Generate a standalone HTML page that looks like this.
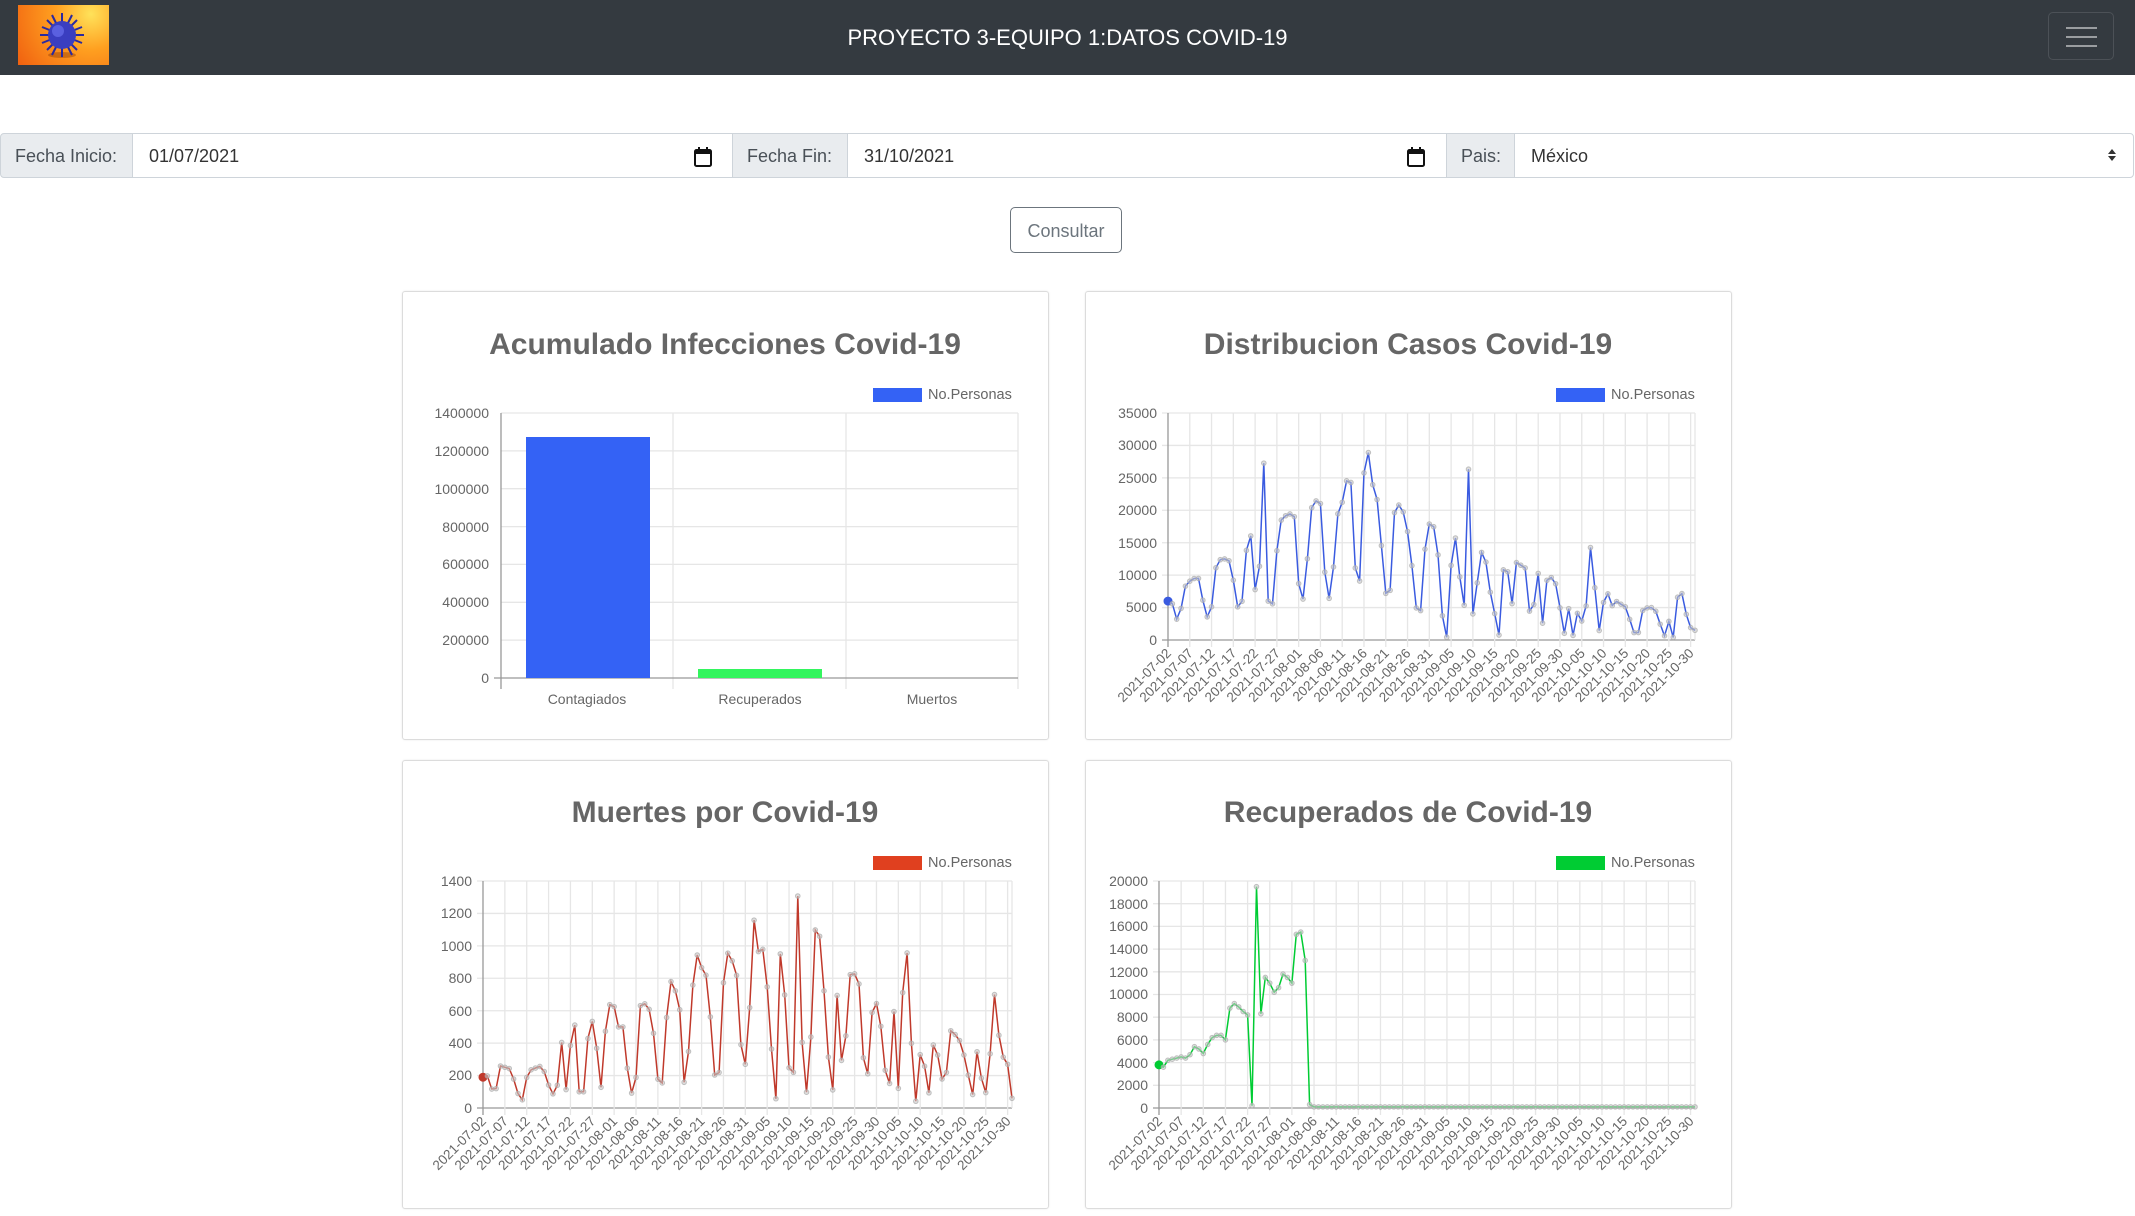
<!DOCTYPE html>
<html><head><meta charset="utf-8">
<style>
*{box-sizing:border-box;margin:0;padding:0}
body{width:2135px;height:1216px;background:#fff;font-family:"Liberation Sans",sans-serif;position:relative;overflow:hidden}
.nav{position:absolute;left:0;top:0;width:2135px;height:75px;background:#343a40}
.logo{position:absolute;left:18px;top:5px;width:91px;height:60px;background:radial-gradient(circle at 80% 15%,#ffe25a 0%,#ffa020 40%,#f06010 100%)}
.title{position:absolute;left:0;width:2135px;top:25px;text-align:center;color:#fff;font-size:22px}
.burger{position:absolute;left:2048px;top:12px;width:66px;height:48px;border:1px solid rgba(255,255,255,.12);border-radius:5px}
.burger i{position:absolute;left:17px;width:31px;height:2px;background:#9a9da0}
.ig{position:absolute;top:133px;height:45px;border:1px solid #ced4da;font-size:18px;color:#495057;line-height:44px}
.lab{background:#e9ecef;padding-left:14px}
.inp{background:#fff;padding-left:16px;color:#333}
.btn{position:absolute;left:1010px;top:207px;width:112px;height:46px;border:1px solid #6c757d;border-radius:5px;font-size:18px;color:#6c757d;text-align:center;line-height:46px}
.card{position:absolute;width:647px;height:449px;border:1px solid #dcdcdc;border-radius:3px;box-shadow:0 0 2px rgba(0,0,0,.08)}
svg.main{position:absolute;left:0;top:0}
</style></head><body>
<div class="nav">
 <div class="logo"><svg width="91" height="60" viewBox="0 0 91 60">
  <ellipse cx="44" cy="50" rx="14" ry="3" fill="rgba(120,40,0,.35)"/>
  <g stroke="#2a2aa0" stroke-width="2">
   <line x1="44" y1="8" x2="44" y2="52"/><line x1="22" y1="30" x2="66" y2="30"/>
   <line x1="29" y1="15" x2="59" y2="45"/><line x1="59" y1="15" x2="29" y2="45"/>
   <line x1="34" y1="10" x2="54" y2="50"/><line x1="54" y1="10" x2="34" y2="50"/>
   <line x1="24" y1="22" x2="64" y2="38"/><line x1="24" y1="38" x2="64" y2="22"/>
  </g>
  <circle cx="44" cy="30" r="14" fill="#3a3ec0"/><circle cx="40" cy="26" r="6" fill="#5a60e0"/>
 </svg></div>
 <div class="title">PROYECTO 3-EQUIPO 1:DATOS COVID-19</div>
 <div class="burger"><i style="top:14px"></i><i style="top:23px"></i><i style="top:32px"></i></div>
</div>

<div class="ig lab" style="left:0;width:133px;border-radius:4px 0 0 4px">Fecha Inicio:</div>
<div class="ig inp" style="left:132px;width:601px">01/07/2021
 <svg style="position:absolute;left:560px;top:12px" width="20" height="22" viewBox="0 0 20 22"><rect x="2" y="4" width="16" height="16" rx="1.5" fill="none" stroke="#111" stroke-width="2"/><rect x="2" y="4" width="16" height="4" fill="#111"/><rect x="5" y="1" width="2" height="5" fill="#111"/><rect x="13" y="1" width="2" height="5" fill="#111"/></svg></div>
<div class="ig lab" style="left:732px;width:116px">Fecha Fin:</div>
<div class="ig inp" style="left:847px;width:600px">31/10/2021
 <svg style="position:absolute;left:558px;top:12px" width="20" height="22" viewBox="0 0 20 22"><rect x="2" y="4" width="16" height="16" rx="1.5" fill="none" stroke="#111" stroke-width="2"/><rect x="2" y="4" width="16" height="4" fill="#111"/><rect x="5" y="1" width="2" height="5" fill="#111"/><rect x="13" y="1" width="2" height="5" fill="#111"/></svg></div>
<div class="ig lab" style="left:1446px;width:69px">Pais:</div>
<div class="ig inp" style="left:1514px;width:620px;border-radius:0 4px 4px 0">México
 <svg style="position:absolute;left:592px;top:13px" width="10" height="16" viewBox="0 0 10 16"><path d="M1 7 L5 2 L9 7Z M1 9 L5 14 L9 9Z" fill="#333"/></svg></div>
<div class="btn">Consultar</div>

<div class="card" style="left:402px;top:291px"></div>
<div class="card" style="left:1085px;top:291px"></div>
<div class="card" style="left:402px;top:760px"></div>
<div class="card" style="left:1085px;top:760px"></div>

<svg class="main" width="2135" height="1216" viewBox="0 0 2135 1216" font-family="Liberation Sans, sans-serif">
<g font-size="30" font-weight="bold" fill="#666" text-anchor="middle">
 <text x="725" y="354">Acumulado Infecciones Covid-19</text>
 <text x="1408" y="354">Distribucion Casos Covid-19</text>
 <text x="725" y="822">Muertes por Covid-19</text>
 <text x="1408" y="822">Recuperados de Covid-19</text>
</g>
<g font-size="14.5" fill="#666">
 <rect x="873" y="388" width="49" height="14" fill="#3462f5"/><text x="928" y="399">No.Personas</text>
 <rect x="1556" y="388" width="49" height="14" fill="#3462f5"/><text x="1611" y="399">No.Personas</text>
 <rect x="873" y="856" width="49" height="14" fill="#e0401f"/><text x="928" y="867">No.Personas</text>
 <rect x="1556" y="856" width="49" height="14" fill="#00cc33"/><text x="1611" y="867">No.Personas</text>
</g>
<g id="grids"></g>
<g stroke="#e6e6e6" stroke-width="1.3">
 <line x1="501" y1="413" x2="1018" y2="413"/><line x1="501" y1="450.9" x2="1018" y2="450.9"/><line x1="501" y1="488.7" x2="1018" y2="488.7"/><line x1="501" y1="526.6" x2="1018" y2="526.6"/><line x1="501" y1="564.4" x2="1018" y2="564.4"/><line x1="501" y1="602.3" x2="1018" y2="602.3"/><line x1="501" y1="640.1" x2="1018" y2="640.1"/>
 <line x1="673" y1="413" x2="673" y2="689"/><line x1="846" y1="413" x2="846" y2="689"/><line x1="1018" y1="413" x2="1018" y2="689"/>
</g>
<g stroke="#999" stroke-width="1.3"><line x1="501" y1="413" x2="501" y2="689"/><line x1="494" y1="678" x2="1018" y2="678"/></g>
<rect x="526" y="437" width="124" height="241" fill="#3462f5"/>
<rect x="698" y="669" width="124" height="9" fill="#33f55e"/>
<g font-size="14" fill="#666" text-anchor="end">
 <text x="489" y="418">1400000</text><text x="489" y="456">1200000</text><text x="489" y="494">1000000</text><text x="489" y="532">800000</text><text x="489" y="569">600000</text><text x="489" y="607">400000</text><text x="489" y="645">200000</text><text x="489" y="683">0</text>
</g>
<g font-size="14" fill="#666" text-anchor="middle"><text x="587" y="704">Contagiados</text><text x="760" y="704">Recuperados</text><text x="932" y="704">Muertos</text></g>

<g font-size="14" fill="#666" text-anchor="end">
 <text x="1157" y="418">35000</text><text x="1157" y="450">30000</text><text x="1157" y="483">25000</text><text x="1157" y="515">20000</text><text x="1157" y="548">15000</text><text x="1157" y="580">10000</text><text x="1157" y="612">5000</text><text x="1157" y="645">0</text>
 <text x="472" y="886">1400</text><text x="472" y="918">1200</text><text x="472" y="951">1000</text><text x="472" y="983">800</text><text x="472" y="1016">600</text><text x="472" y="1048">400</text><text x="472" y="1080">200</text><text x="472" y="1113">0</text>
 <text x="1148" y="886">20000</text><text x="1148" y="909">18000</text><text x="1148" y="931">16000</text><text x="1148" y="954">14000</text><text x="1148" y="977">12000</text><text x="1148" y="999">10000</text><text x="1148" y="1022">8000</text><text x="1148" y="1045">6000</text><text x="1148" y="1068">4000</text><text x="1148" y="1090">2000</text><text x="1148" y="1113">0</text>
</g>
<g id="lines"></g>
<g font-size="13.5" fill="#666" text-anchor="end">
<g transform="translate(1172,654)">
<text transform="translate(0,0) rotate(-45)">2021-07-02</text><text transform="translate(21.8,0) rotate(-45)">2021-07-07</text><text transform="translate(43.6,0) rotate(-45)">2021-07-12</text><text transform="translate(65.3,0) rotate(-45)">2021-07-17</text><text transform="translate(87.1,0) rotate(-45)">2021-07-22</text><text transform="translate(108.9,0) rotate(-45)">2021-07-27</text><text transform="translate(130.7,0) rotate(-45)">2021-08-01</text><text transform="translate(152.4,0) rotate(-45)">2021-08-06</text><text transform="translate(174.2,0) rotate(-45)">2021-08-11</text><text transform="translate(196,0) rotate(-45)">2021-08-16</text><text transform="translate(217.8,0) rotate(-45)">2021-08-21</text><text transform="translate(239.5,0) rotate(-45)">2021-08-26</text><text transform="translate(261.3,0) rotate(-45)">2021-08-31</text><text transform="translate(283.1,0) rotate(-45)">2021-09-05</text><text transform="translate(304.9,0) rotate(-45)">2021-09-10</text><text transform="translate(326.7,0) rotate(-45)">2021-09-15</text><text transform="translate(348.4,0) rotate(-45)">2021-09-20</text><text transform="translate(370.2,0) rotate(-45)">2021-09-25</text><text transform="translate(392,0) rotate(-45)">2021-09-30</text><text transform="translate(413.8,0) rotate(-45)">2021-10-05</text><text transform="translate(435.5,0) rotate(-45)">2021-10-10</text><text transform="translate(457.3,0) rotate(-45)">2021-10-15</text><text transform="translate(479.1,0) rotate(-45)">2021-10-20</text><text transform="translate(500.9,0) rotate(-45)">2021-10-25</text><text transform="translate(522.6,0) rotate(-45)">2021-10-30</text>
</g>
<g transform="translate(487,1122)">
<text transform="translate(0,0) rotate(-45)">2021-07-02</text><text transform="translate(21.9,0) rotate(-45)">2021-07-07</text><text transform="translate(43.7,0) rotate(-45)">2021-07-12</text><text transform="translate(65.6,0) rotate(-45)">2021-07-17</text><text transform="translate(87.4,0) rotate(-45)">2021-07-22</text><text transform="translate(109.3,0) rotate(-45)">2021-07-27</text><text transform="translate(131.2,0) rotate(-45)">2021-08-01</text><text transform="translate(153,0) rotate(-45)">2021-08-06</text><text transform="translate(174.9,0) rotate(-45)">2021-08-11</text><text transform="translate(196.7,0) rotate(-45)">2021-08-16</text><text transform="translate(218.6,0) rotate(-45)">2021-08-21</text><text transform="translate(240.5,0) rotate(-45)">2021-08-26</text><text transform="translate(262.3,0) rotate(-45)">2021-08-31</text><text transform="translate(284.2,0) rotate(-45)">2021-09-05</text><text transform="translate(306,0) rotate(-45)">2021-09-10</text><text transform="translate(327.9,0) rotate(-45)">2021-09-15</text><text transform="translate(349.8,0) rotate(-45)">2021-09-20</text><text transform="translate(371.6,0) rotate(-45)">2021-09-25</text><text transform="translate(393.5,0) rotate(-45)">2021-09-30</text><text transform="translate(415.3,0) rotate(-45)">2021-10-05</text><text transform="translate(437.2,0) rotate(-45)">2021-10-10</text><text transform="translate(459.1,0) rotate(-45)">2021-10-15</text><text transform="translate(480.9,0) rotate(-45)">2021-10-20</text><text transform="translate(502.8,0) rotate(-45)">2021-10-25</text><text transform="translate(524.6,0) rotate(-45)">2021-10-30</text>
</g>
<g transform="translate(1163,1122)">
<text transform="translate(0,0) rotate(-45)">2021-07-02</text><text transform="translate(22.1,0) rotate(-45)">2021-07-07</text><text transform="translate(44.3,0) rotate(-45)">2021-07-12</text><text transform="translate(66.4,0) rotate(-45)">2021-07-17</text><text transform="translate(88.6,0) rotate(-45)">2021-07-22</text><text transform="translate(110.7,0) rotate(-45)">2021-07-27</text><text transform="translate(132.9,0) rotate(-45)">2021-08-01</text><text transform="translate(155,0) rotate(-45)">2021-08-06</text><text transform="translate(177.2,0) rotate(-45)">2021-08-11</text><text transform="translate(199.3,0) rotate(-45)">2021-08-16</text><text transform="translate(221.5,0) rotate(-45)">2021-08-21</text><text transform="translate(243.6,0) rotate(-45)">2021-08-26</text><text transform="translate(265.8,0) rotate(-45)">2021-08-31</text><text transform="translate(287.9,0) rotate(-45)">2021-09-05</text><text transform="translate(310.1,0) rotate(-45)">2021-09-10</text><text transform="translate(332.2,0) rotate(-45)">2021-09-15</text><text transform="translate(354.4,0) rotate(-45)">2021-09-20</text><text transform="translate(376.5,0) rotate(-45)">2021-09-25</text><text transform="translate(398.7,0) rotate(-45)">2021-09-30</text><text transform="translate(420.8,0) rotate(-45)">2021-10-05</text><text transform="translate(443,0) rotate(-45)">2021-10-10</text><text transform="translate(465.1,0) rotate(-45)">2021-10-15</text><text transform="translate(487.3,0) rotate(-45)">2021-10-20</text><text transform="translate(509.4,0) rotate(-45)">2021-10-25</text><text transform="translate(531.6,0) rotate(-45)">2021-10-30</text>
</g>
</g>
</svg>
<script>
var NS="http://www.w3.org/2000/svg";
function el(p,t,a){var e=document.createElementNS(NS,t);for(var k in a)e.setAttribute(k,a[k]);p.appendChild(e);return e;}
var G=document.getElementById('grids'),L=document.getElementById('lines');
function resample(a,n){var o=[];for(var i=0;i<n;i++){var t=i*(a.length-1)/(n-1),j=Math.floor(t),f=t-j;o.push(j+1<a.length?a[j]*(1-f)+a[j+1]*f:a[j]);}return o;}
function chart(x0,x1,y0,y1,max,n,data,col){
 for(var i=0;i<=n;i++){var y=y0-(y0-y1)*i/n;el(G,'line',{x1:x0-6,x2:x1,y1:y,y2:y,stroke:i==0?'#999':'#e6e6e6','stroke-width':1.3});}
 for(var k=0;k<=24;k++){var x=x0+5*k*(x1-x0)/121;el(G,'line',{x1:x,x2:x,y1:y1,y2:y0+7,stroke:k==0?'#999':'#e6e6e6','stroke-width':1.3});}
 el(G,'line',{x1:x1,x2:x1,y1:y1,y2:y0,stroke:'#e6e6e6','stroke-width':1.3});
 var pts=[];for(var i=0;i<data.length;i++){var x=x0+i*(x1-x0)/(data.length-1),y=y0-(y0-y1)*data[i]/max;pts.push([x,y]);}
 el(L,'polyline',{points:pts.map(function(p){return p[0].toFixed(1)+','+p[1].toFixed(1)}).join(' '),fill:'none',stroke:col,'stroke-width':1.5});
 pts.forEach(function(p,i){el(L,'circle',{cx:p[0],cy:p[1],r:i?2.3:4,fill:i?'rgba(200,200,200,.6)':col,stroke:i?'rgba(170,170,170,.7)':col,'stroke-width':1});});
}
var d=[6,5.5,2,8,9,9.5,9.5,4,3,11,12.5,12.5,12,5,5.5,15,16.5,0,32,6,5.5,18,19,19.5,19,6,6.5,20,21.5,21,7,6,19,21,25,24,0,25,29,23,21,8,5.5,20,21,19,14,5,4.5,17,18.5,16,4,0,16,15.5,0,27,0,13,14,8,4,0,17,3,12,11.5,11,0,13,2,10,9.5,8,0,5,0,6,0,15.5,8,0,9,5,6,5.5,5,2,0,4.5,5,5,4,0,3,0,9.5,5,2,1.5];
chart(1168,1695,640,413,35,7,resample(d,122),'#3a5be0');
var m=[1.9,2,0.5,2.6,2.5,2.4,1,0.5,2.3,2.4,2.6,2.2,1,0.7,4.1,0.2,7,1,1,6.1,4.3,1.2,5.9,6.8,5,5,1,0.8,6.5,6.4,5.8,1.8,1.5,8,7.5,6,0,6.8,9.5,8.5,8,2,2.2,9.8,9.3,8.5,3,2.5,12,9.5,9.9,5,0,11.5,4,0,14,0,2,11,10.5,5,0,7.5,1,8.2,8.3,7.5,0,5.8,6.5,4.4,0,6.1,0,12.3,4.6,0,4.8,0,3.9,3.1,0.8,4.8,4.5,4,2.4,0.8,4.2,0,2.8,7.5,3,3.3,0.6];
chart(483,1012,1108,881,14,7,resample(m,122),'#c0392b');
var r=[3.8,3.6,4.2,4.3,4.4,4.5,4.4,4.7,5.4,5.2,4.8,5.6,6.2,6.4,6.4,6,8.8,9.2,8.9,8.5,8.2,0.2,19.5,8.3,11.5,11,10.2,10.6,11.8,11.5,11,15.3,15.5,13,0.3];
while(r.length<122)r.push(0.1);
chart(1159,1695,1108,881,20,10,r,'#00cc33');
</script>
</body></html>
